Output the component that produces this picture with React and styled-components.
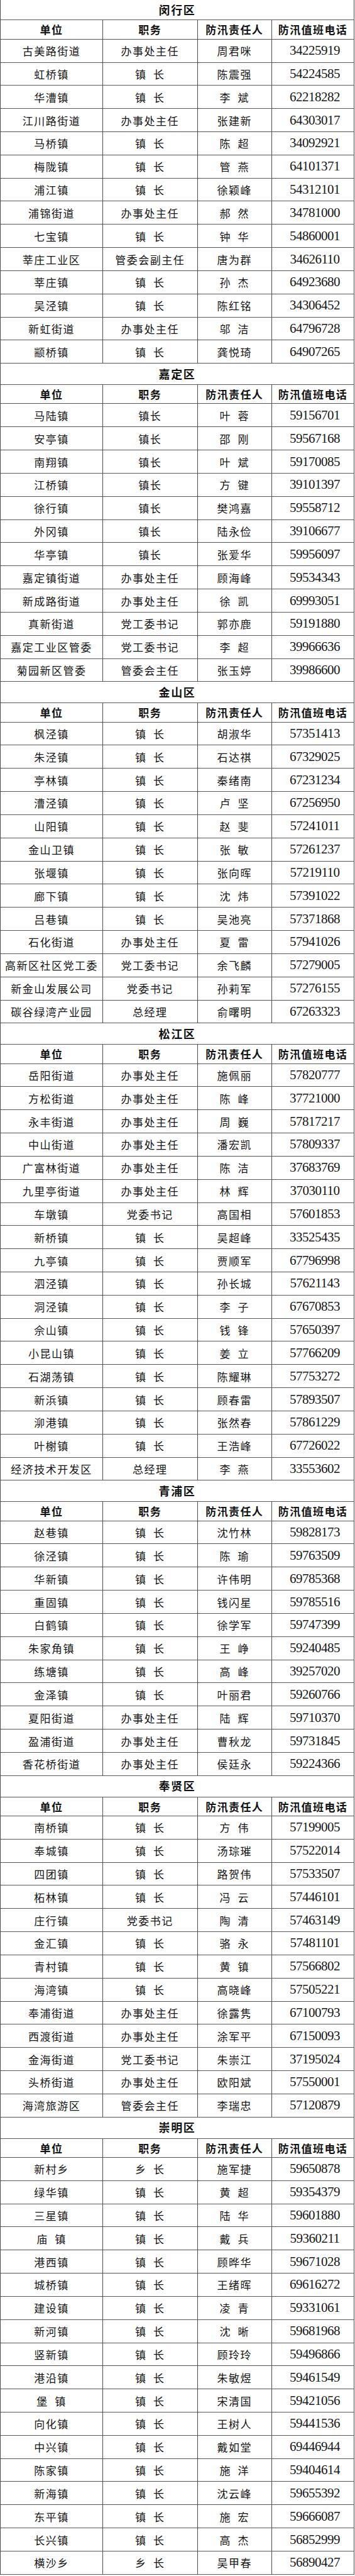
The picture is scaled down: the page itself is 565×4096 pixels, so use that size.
import React from "react";
import styled, { createGlobalStyle } from "styled-components";

const GlobalStyle = createGlobalStyle`
  html, body { margin: 0; padding: 0; background: #ffffff; }
  body {
    font-family: "Noto Sans CJK SC", "Noto Sans", sans-serif;
    color: #111111;
  }
`;

const districts = [
  {
    name: "闵行区",
    rows: [
      ["古美路街道", "办事处主任", "周君咪", "34225919"],
      ["虹桥镇", "镇 长", "陈震强", "54224585"],
      ["华漕镇", "镇 长", "李 斌", "62218282"],
      ["江川路街道", "办事处主任", "张建新", "64303017"],
      ["马桥镇", "镇 长", "陈 超", "34092921"],
      ["梅陇镇", "镇 长", "管 燕", "64101371"],
      ["浦江镇", "镇 长", "徐颖峰", "54312101"],
      ["浦锦街道", "办事处主任", "郝 然", "34781000"],
      ["七宝镇", "镇 长", "钟 华", "54860001"],
      ["莘庄工业区", "管委会副主任", "唐为群", "34626110"],
      ["莘庄镇", "镇 长", "孙 杰", "64923680"],
      ["吴泾镇", "镇 长", "陈红铭", "34306452"],
      ["新虹街道", "办事处主任", "邬 洁", "64796728"],
      ["颛桥镇", "镇 长", "龚悦琦", "64907265"],
    ],
  },
  {
    name: "嘉定区",
    rows: [
      ["马陆镇", "镇长", "叶 蓉", "59156701"],
      ["安亭镇", "镇长", "邵 刚", "59567168"],
      ["南翔镇", "镇长", "叶 斌", "59170085"],
      ["江桥镇", "镇长", "方 键", "39101397"],
      ["徐行镇", "镇长", "樊鸿嘉", "59558712"],
      ["外冈镇", "镇长", "陆永俭", "39106677"],
      ["华亭镇", "镇长", "张爱华", "59956097"],
      ["嘉定镇街道", "办事处主任", "顾海峰", "59534343"],
      ["新成路街道", "办事处主任", "徐 凯", "69993051"],
      ["真新街道", "党工委书记", "郭亦鹿", "59191880"],
      ["嘉定工业区管委", "党工委书记", "李 超", "39966636"],
      ["菊园新区管委", "管委会主任", "张玉婷", "39986600"],
    ],
  },
  {
    name: "金山区",
    rows: [
      ["枫泾镇", "镇 长", "胡淑华", "57351413"],
      ["朱泾镇", "镇 长", "石达祺", "67329025"],
      ["亭林镇", "镇 长", "秦绪南", "67231234"],
      ["漕泾镇", "镇 长", "卢 坚", "67256950"],
      ["山阳镇", "镇 长", "赵 斐", "57241011"],
      ["金山卫镇", "镇 长", "张 敏", "57261237"],
      ["张堰镇", "镇 长", "张向晖", "57219110"],
      ["廊下镇", "镇 长", "沈 炜", "57391022"],
      ["吕巷镇", "镇 长", "吴池亮", "57371868"],
      ["石化街道", "办事处主任", "夏 雷", "57941026"],
      ["高新区社区党工委", "党工委书记", "余飞麟", "57279005"],
      ["新金山发展公司", "党委书记", "孙莉军", "57276155"],
      ["碳谷绿湾产业园", "总经理", "俞曙明", "67263323"],
    ],
  },
  {
    name: "松江区",
    rows: [
      ["岳阳街道", "办事处主任", "施佩丽", "57820777"],
      ["方松街道", "办事处主任", "陈 峰", "37721000"],
      ["永丰街道", "办事处主任", "周 巍", "57817217"],
      ["中山街道", "办事处主任", "潘宏凯", "57809337"],
      ["广富林街道", "办事处主任", "陈 洁", "37683769"],
      ["九里亭街道", "办事处主任", "林 辉", "37030110"],
      ["车墩镇", "党委书记", "高国相", "57601853"],
      ["新桥镇", "镇 长", "吴超峰", "33525435"],
      ["九亭镇", "镇 长", "贾顺军", "67796998"],
      ["泗泾镇", "镇 长", "孙长城", "57621143"],
      ["洞泾镇", "镇 长", "李 子", "67670853"],
      ["佘山镇", "镇 长", "钱 锋", "57650397"],
      ["小昆山镇", "镇 长", "姜 立", "57766209"],
      ["石湖荡镇", "镇 长", "陈耀琳", "57753272"],
      ["新浜镇", "镇 长", "顾春雷", "57893507"],
      ["泖港镇", "镇 长", "张然春", "57861229"],
      ["叶榭镇", "镇 长", "王浩峰", "67726022"],
      ["经济技术开发区", "总经理", "李 燕", "33553602"],
    ],
  },
  {
    name: "青浦区",
    rows: [
      ["赵巷镇", "镇 长", "沈竹林", "59828173"],
      ["徐泾镇", "镇 长", "陈 瑜", "59763509"],
      ["华新镇", "镇 长", "许伟明", "69785368"],
      ["重固镇", "镇 长", "钱闪星", "59785516"],
      ["白鹤镇", "镇 长", "徐学军", "59747399"],
      ["朱家角镇", "镇 长", "王 峥", "59240485"],
      ["练塘镇", "镇 长", "高 峰", "39257020"],
      ["金泽镇", "镇 长", "叶丽君", "59260766"],
      ["夏阳街道", "办事处主任", "陆 辉", "59710370"],
      ["盈浦街道", "办事处主任", "曹秋龙", "59731845"],
      ["香花桥街道", "办事处主任", "侯廷永", "59224366"],
    ],
  },
  {
    name: "奉贤区",
    rows: [
      ["南桥镇", "镇 长", "方 伟", "57199005"],
      ["奉城镇", "镇 长", "汤琮璀", "57522014"],
      ["四团镇", "镇 长", "路贺伟", "57533507"],
      ["柘林镇", "镇 长", "冯 云", "57446101"],
      ["庄行镇", "党委书记", "陶 清", "57463149"],
      ["金汇镇", "镇 长", "骆 永", "57481101"],
      ["青村镇", "镇 长", "黄 镇", "57566802"],
      ["海湾镇", "镇 长", "高晓峰", "57505221"],
      ["奉浦街道", "办事处主任", "徐露隽", "67100793"],
      ["西渡街道", "办事处主任", "涂军平", "67150093"],
      ["金海街道", "党工委书记", "朱崇江", "37195024"],
      ["头桥街道", "办事处主任", "欧阳斌", "57550001"],
      ["海湾旅游区", "管委会主任", "李瑞忠", "57120879"],
    ],
  },
  {
    name: "崇明区",
    rows: [
      ["新村乡", "乡 长", "施军捷", "59650878"],
      ["绿华镇", "镇 长", "黄 超", "59354379"],
      ["三星镇", "镇 长", "陆 华", "59601880"],
      ["庙 镇", "镇 长", "戴 兵", "59360211"],
      ["港西镇", "镇 长", "顾晔华", "59671028"],
      ["城桥镇", "镇 长", "王绪晖", "69616272"],
      ["建设镇", "镇 长", "凌 青", "59331061"],
      ["新河镇", "镇 长", "沈 晰", "59681968"],
      ["竖新镇", "镇 长", "顾玲玲", "59496866"],
      ["港沿镇", "镇 长", "朱敏煜", "59461549"],
      ["堡 镇", "镇 长", "宋清国", "59421056"],
      ["向化镇", "镇 长", "王树人", "59441536"],
      ["中兴镇", "镇 长", "戴如堂", "69446944"],
      ["陈家镇", "镇 长", "施 洋", "59404614"],
      ["新海镇", "镇 长", "沈云峰", "59655392"],
      ["东平镇", "镇 长", "施 宏", "59666087"],
      ["长兴镇", "镇 长", "高 杰", "56852999"],
      ["横沙乡", "乡 长", "吴甲春", "56890427"],
    ],
  },
];

const headers = ["单位", "职务", "防汛责任人", "防汛值班电话"];

const Page = styled.main`
  width: 565px;
  display: flex;
  flex-direction: column;
`;

const DistrictTable = styled.section`
  width: 564px;
  box-sizing: border-box;
  display: grid;
  grid-template-columns: 163px 150.5px 118.5px 131px;
  border-left: 1px solid #4d4d4d;
`;

const Cell = styled.div`
  box-sizing: border-box;
  display: flex;
  align-items: center;
  justify-content: center;
  border-right: 1px solid #4d4d4d;
  border-bottom: 1px solid #5a5a5a;
  white-space: pre;
  overflow: hidden;
`;

const TitleCell = styled(Cell)`
  grid-column: 1 / -1;
  height: ${(p) => (p.$first ? "32.3px" : "33.8px")};
  font-family: "Noto Sans CJK SC", sans-serif;
  font-weight: 700;
  font-size: 18px;
  letter-spacing: 1.6px;
  padding-bottom: 2px;
  color: #111;
`;

const HeadCell = styled(Cell)`
  height: 30.4px;
  font-family: "Noto Sans CJK SC", sans-serif;
  font-weight: 700;
  font-size: 17px;
  letter-spacing: 1.4px;
  color: #111;
`;

const TextCell = styled(Cell)`
  height: 36.83px;
  font-family: "Noto Sans CJK SC", sans-serif;
  font-weight: 400;
  font-size: 17px;
  letter-spacing: 1.5px;
  word-spacing: 5px;
  color: #151515;
`;

const PhoneCell = styled(Cell)`
  height: 36.83px;
  padding-left: 6px;
  font-family: "Liberation Serif", "DejaVu Serif", serif;
  font-size: 21px;
  letter-spacing: -0.5px;
  color: #151515;
`;

function District({ district, first }) {
  return (
    <DistrictTable>
      <TitleCell $first={first}>{district.name}</TitleCell>
      {headers.map((h) => (
        <HeadCell key={h}>{h}</HeadCell>
      ))}
      {district.rows.map((r) => (
        <React.Fragment key={r[0] + r[3]}>
          <TextCell>{r[0]}</TextCell>
          <TextCell>{r[1]}</TextCell>
          <TextCell>{r[2]}</TextCell>
          <PhoneCell>{r[3]}</PhoneCell>
        </React.Fragment>
      ))}
    </DistrictTable>
  );
}

export default function App() {
  return (
    <>
      <GlobalStyle />
      <Page>
        {districts.map((d, i) => (
          <District key={d.name} district={d} first={i === 0} />
        ))}
      </Page>
    </>
  );
}
